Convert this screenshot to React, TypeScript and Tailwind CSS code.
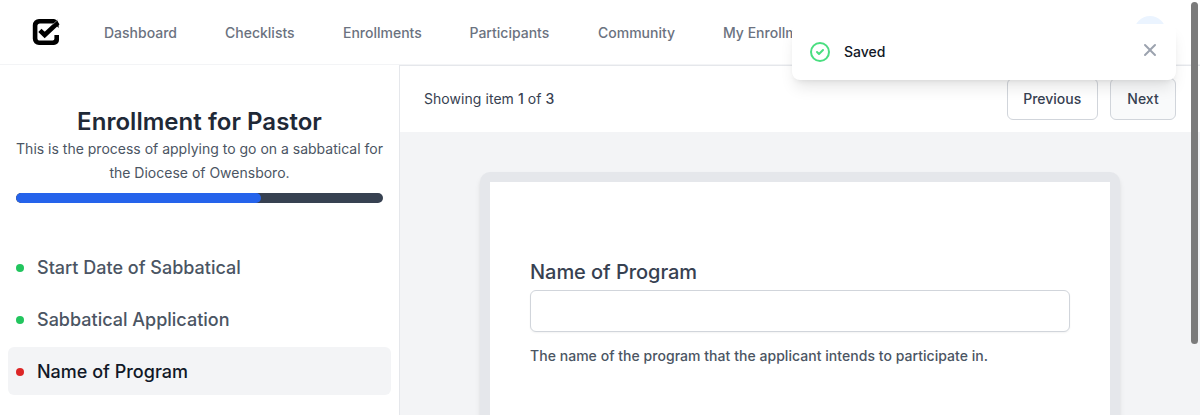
const NAV = [
  { label: 'Dashboard', width: 'w-[73px]' },
  { label: 'Checklists', width: 'w-[70px]' },
  { label: 'Enrollments', width: 'w-[78.5px]' },
  { label: 'Participants', width: 'w-[80.5px]' },
  { label: 'Community', width: 'w-[77px]' },
  { label: 'My Enrollments', width: 'w-[104px]' },
];

const STEPS = [
  { label: 'Start Date of Sabbatical', done: true, active: false },
  { label: 'Sabbatical Application', done: true, active: false },
  { label: 'Name of Program', done: false, active: true },
];

function Logo() {
  return (
    <svg width="28" height="28" viewBox="0 0 28 28" fill="none" className="shrink-0">
      <path d="M26.600 10V6.500a5.600 5.600 0 0 0-4.600-5.500H7A6.200 6.200 0 0 0 .8 7.200v13.600A6.200 6.200 0 0 0 7 27h15a5 5 0 0 0 5-5v-5h-4.600v3.800a1.800 1.800 0 0 1-1.800 1.800H8a2.600 2.600 0 0 1-2.600-2.600V8A2.600 2.600 0 0 1 8 5.400h14.500z" fill="#000" />
      <path d="M22.200 10.600h5v4.800h-5z" fill="#fff" />
      <path d="M7.900 12.300 12.700 17 26 4.500" stroke="#000" strokeWidth="4.600" />
      <path d="m20.500 6.600 5.500-5" stroke="#aaa" strokeWidth="0.700" />
    </svg>
  );
}

function Header() {
  return (
    <header className="flex h-[65px] shrink-0 items-center border-b border-[#f3f4f6] bg-white pl-8">
      <Logo />
      <nav className="ml-11 mt-0.5 flex gap-12 whitespace-nowrap text-sm font-medium text-[#6b7280]">
        {NAV.map((n) => (
          <a key={n.label} className={n.width}>{n.label}</a>
        ))}
      </nav>
      <div className="ml-auto mr-[34px] size-8 rounded-full bg-[#ebf4ff]" />
    </header>
  );
}

function Sidebar() {
  return (
    <aside className="w-[400px] shrink-0 border-r border-[#e5e7eb] bg-white pt-[41px]">
      <div className="px-4 text-center">
        <h1 className="text-2xl leading-[31px] font-semibold tracking-[0.04px] text-[#1f2937]">Enrollment for Pastor</h1>
        <p className="-mx-1 whitespace-nowrap text-sm leading-6 text-[#4b5563]">
          This is the process of applying to go on a sabbatical for<br />the Diocese of Owensboro.
        </p>
        <div className="mt-2 h-2.5 overflow-hidden rounded-full bg-[#374151]">
          <div className="h-full w-2/3 rounded-full bg-[#2563eb]" />
        </div>
      </div>
      <ul className="mt-10 flex flex-col gap-1 px-2">
        {STEPS.map((s) => (
          <li
            key={s.label}
            className={`flex h-12 items-center gap-[13px] rounded-md px-2 pt-0.5 text-lg font-medium ${s.active ? 'bg-[#f3f4f6] text-[#111827]' : 'text-[#4b5563]'}`}
          >
            <span className={`size-2 rounded-full ${s.done ? 'bg-[#22c55e]' : 'bg-[#dc2626]'}`} />
            {s.label}
          </li>
        ))}
      </ul>
    </aside>
  );
}

function Toast() {
  return (
    <div className="absolute left-[792px] top-6 flex h-14 w-96 items-center rounded-lg bg-white pl-4 pr-4 shadow-[0_10px_15px_-3px_rgba(0,0,0,0.1),0_4px_6px_-4px_rgba(0,0,0,0.1)]">
      <svg width="24" height="24" viewBox="0 0 24 24" fill="none" stroke="#4ade80" strokeWidth="2" strokeLinecap="round" strokeLinejoin="round">
        <path d="M9 12l2 2 4-4m6 2a9 9 0 11-18 0 9 9 0 0118 0z" />
      </svg>
      <span className="ml-3 text-sm font-medium text-[#111827]">Saved</span>
      <svg className="-mt-1 ml-auto" width="20" height="20" viewBox="0 0 20 20" fill="#9ca3af">
        <path d="M4.293 4.293a1 1 0 011.414 0L10 8.586l4.293-4.293a1 1 0 111.414 1.414L11.414 10l4.293 4.293a1 1 0 01-1.414 1.414L10 11.414l-4.293 4.293a1 1 0 01-1.414-1.414L8.586 10 4.293 5.707a1 1 0 010-1.414z" />
      </svg>
    </div>
  );
}

export default function App() {
  return (
    <div className="relative flex h-[415px] w-[1200px] flex-col overflow-hidden bg-[#f3f4f6] font-['Inter',sans-serif]">
      <Header />
      <div className="flex min-h-0 flex-1">
        <Sidebar />
        <main className="flex min-w-0 flex-1 flex-col">
          <div className="flex h-[67px] shrink-0 items-center justify-between border-t border-[#e5e7eb] bg-white pl-6 pr-6">
            <p className="text-sm tracking-[0.05px] text-[#374151]">
              Showing item <span className="font-medium">1</span> of <span className="font-medium">3</span>
            </p>
            <div className="flex gap-3 text-sm font-medium text-[#374151]">
              <button className="h-[42px] w-[91.5px] rounded-md border border-[#d1d5db] bg-white">Previous</button>
              <button className="h-[42px] w-[66px] rounded-md border border-[#d1d5db] bg-[#f9fafb]">Next</button>
            </div>
          </div>
          <section className="mx-auto mt-10 h-[400px] w-[640px] shrink-0 rounded-[10px] border-[10px] border-[#e5e7eb] bg-[#e5e7eb] shadow-md">
            <div className="h-full bg-white px-10 pt-[76px]">
              <label htmlFor="program" className="block text-xl font-medium tracking-[-0.05px] text-[#374151]">Name of Program</label>
              <input id="program" className="mt-1 block h-[42px] w-full rounded-md border border-[#d1d5db] bg-white shadow-[0_1px_2px_rgba(0,0,0,0.05)]" />
              <p className="mt-[14px] text-sm font-medium tracking-[0.04px] text-[#4b5563]">The name of the program that the applicant intends to participate in.</p>
            </div>
          </section>
        </main>
      </div>
      <Toast />
      <div className="absolute left-[1191px] top-[2px] h-[342px] w-[7px] rounded-full bg-[#7b7b7b]" />
    </div>
  );
}
